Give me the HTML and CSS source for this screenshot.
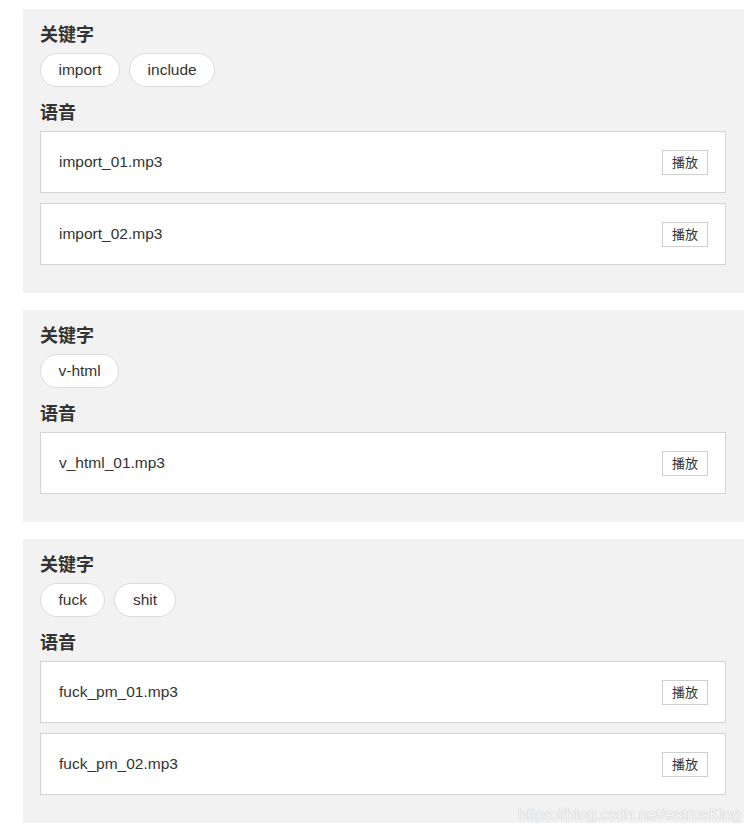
FILE: index.html
```html
<!DOCTYPE html>
<html lang="zh">
<head>
<meta charset="utf-8">
<link rel="stylesheet" href="styles.css">
</head>
<body>
<div class="page">
  <section class="card">
    <h3 class="title">关键字</h3>
    <div class="tags">
      <span class="tag">import</span>
      <span class="tag">include</span>
    </div>
    <h3 class="title">语音</h3>
    <div class="list">
      <div class="item"><span class="name">import_01.mp3</span><button class="play">播放</button></div>
      <div class="item"><span class="name">import_02.mp3</span><button class="play">播放</button></div>
    </div>
  </section>
  <section class="card">
    <h3 class="title">关键字</h3>
    <div class="tags">
      <span class="tag">v-html</span>
    </div>
    <h3 class="title">语音</h3>
    <div class="list">
      <div class="item"><span class="name">v_html_01.mp3</span><button class="play">播放</button></div>
    </div>
  </section>
  <section class="card">
    <h3 class="title">关键字</h3>
    <div class="tags">
      <span class="tag">fuck</span>
      <span class="tag">shit</span>
    </div>
    <h3 class="title">语音</h3>
    <div class="list">
      <div class="item"><span class="name">fuck_pm_01.mp3</span><button class="play">播放</button></div>
      <div class="item"><span class="name">fuck_pm_02.mp3</span><button class="play">播放</button></div>
    </div>
  </section>
</div>
<div class="watermark">https://blog.csdn.net/estrusKing</div>
</body>
</html>
```
FILE: styles.css
```css
html, body {
  margin: 0;
  padding: 0;
  background: #ffffff;
}
body {
  font-family: "Liberation Sans", Arial, "Noto Sans CJK SC", sans-serif;
  color: #333333;
  position: relative;
  height: 835px;
  overflow: hidden;
}
.page {
  padding: 9px 0 0 23px;
  display: flex;
  flex-direction: column;
  gap: 17px;
}
.card {
  width: 721px;
  box-sizing: border-box;
  background: #f2f2f2;
  padding: 16px 18px 28px 17px;
}
.title {
  margin: 0 0 11px 0;
  font-family: "Noto Sans CJK SC", sans-serif;
  font-weight: 700;
  font-size: 18px;
  line-height: 17px;
  color: #333333;
}
.tags {
  display: flex;
  gap: 9px;
  margin-bottom: 16px;
}
.tag {
  display: inline-flex;
  align-items: center;
  height: 34px;
  box-sizing: border-box;
  padding: 0 17.5px;
  border: 1px solid #dcdcdc;
  border-radius: 17px;
  background: #ffffff;
  font-size: 15.5px;
  color: #333333;
}
.list {
  display: flex;
  flex-direction: column;
  gap: 10px;
}
.item {
  height: 62px;
  box-sizing: border-box;
  border: 1px solid #d4d4d4;
  background: #ffffff;
  display: flex;
  align-items: center;
  justify-content: space-between;
  padding: 0 17px 0 18px;
}
.name {
  font-size: 15.5px;
  color: #333333;
}
.play {
  height: 25px;
  width: 46px;
  box-sizing: border-box;
  border: 1px solid #cfcfcf;
  background: #ffffff;
  font-family: "Noto Sans CJK SC", sans-serif;
  font-size: 13px;
  color: #333333;
  padding: 0;
  line-height: 22px;
}
.watermark {
  position: absolute;
  right: 8px;
  top: 806px;
  font-size: 16px;
  color: rgba(255, 255, 255, 0.85);
  text-shadow: 0 0 1px #c8c8c8, 0 0 1px #c8c8c8;
}
```
